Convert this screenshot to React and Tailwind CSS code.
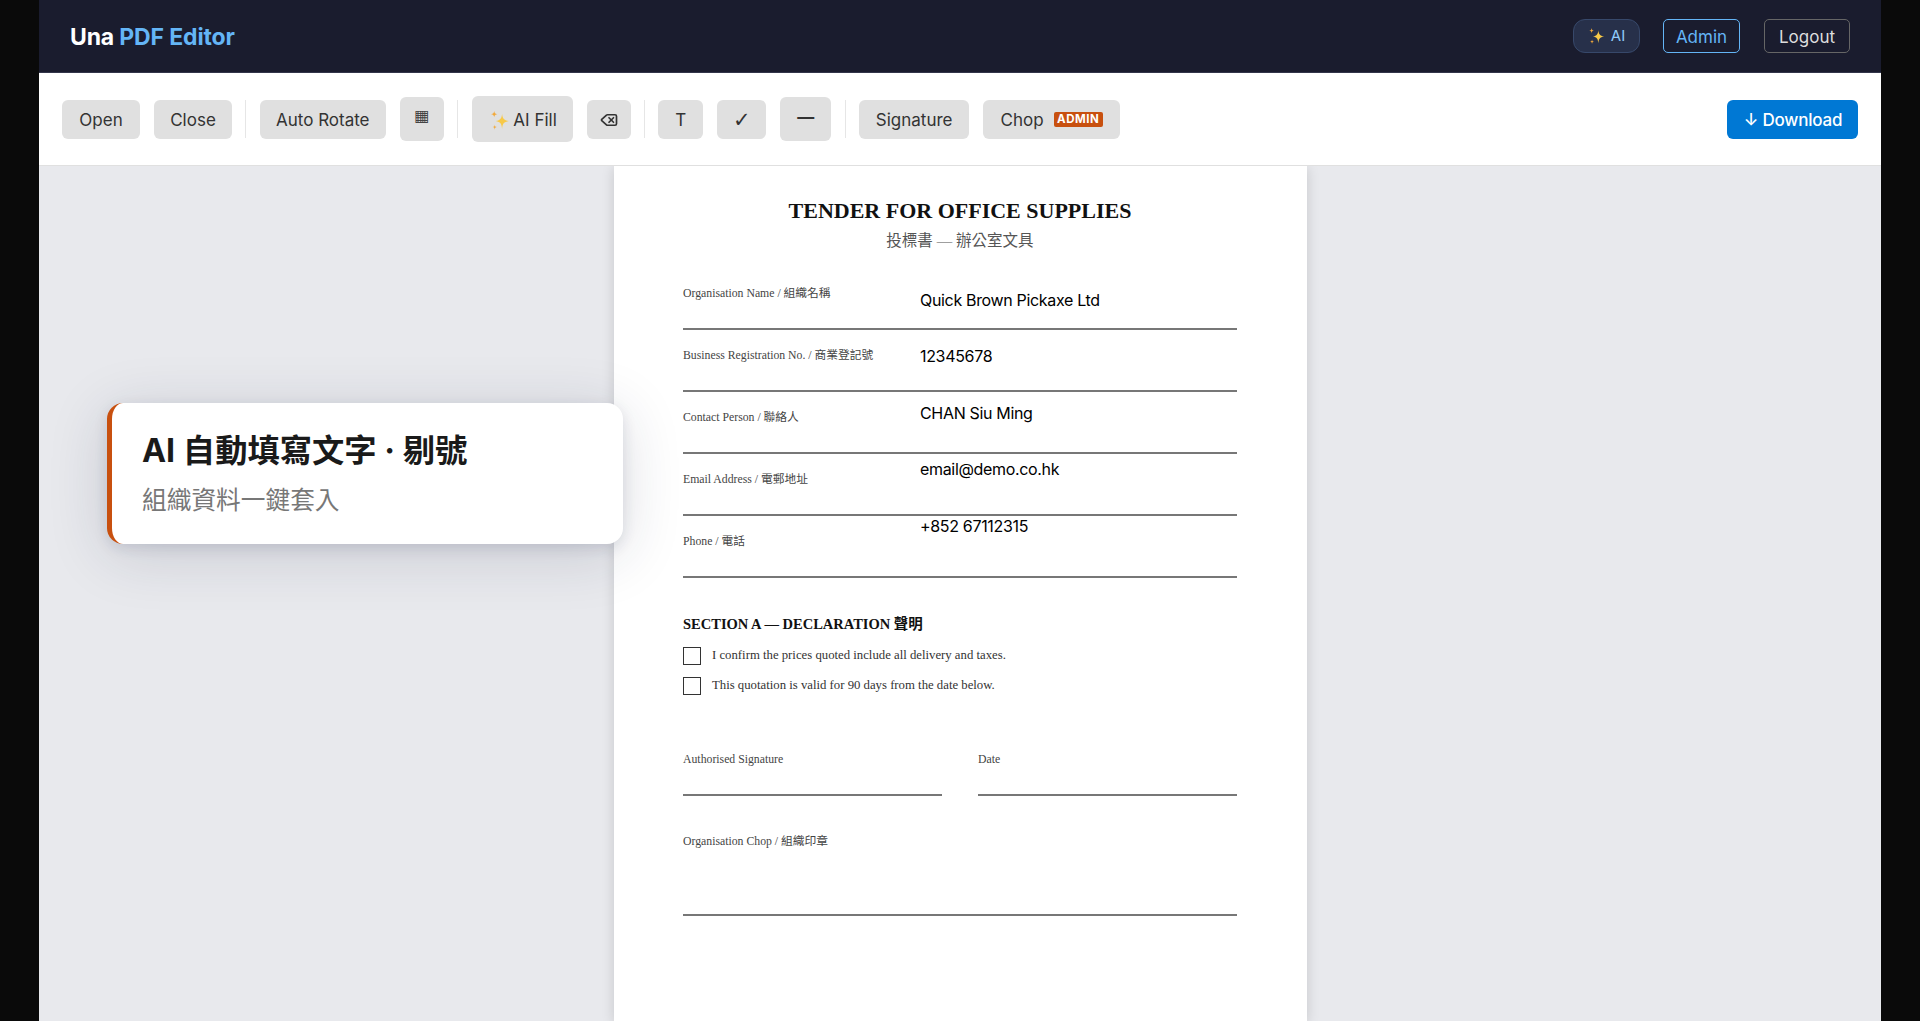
import React from "react";
import { Delete } from "lucide-react";

const sans = "font-['Inter','Noto_Sans_CJK_TC',sans-serif]";
const serif = "font-['Liberation_Serif','Noto_Sans_CJK_TC',serif]";

const Sparkles = ({ className }) => (
  <svg viewBox="0 0 20 20" className={className}>
    <path d="M11.5 3.5 C12 8 13 9.5 18 10.5 C13 11.5 12 13 11.5 18 C11 13 10 11.5 5.5 10.5 C10 9.5 11 8 11.5 3.5Z" fill="#f7c948" />
    <path d="M4 1 C4.3 3 4.8 3.7 7 4 C4.8 4.3 4.3 5 4 7 C3.7 5 3.2 4.3 1 4 C3.2 3.7 3.7 3 4 1Z" fill="#f2a93b" />
    <path d="M4.5 14 C4.7 15.5 5 16 6.5 16.3 C5 16.6 4.7 17 4.5 18.8 C4.3 17 4 16.6 2.5 16.3 C4 16 4.3 15.5 4.5 14Z" fill="#f2a93b" />
  </svg>
);

const Sep = () => <div className="w-px h-[38px] bg-[#e6e6e6] mx-[13.4px]" />;

function ToolButton({ children, className = "" }) {
  return (
    <button className={`flex items-center justify-center h-[39px] bg-[#e0e0e0] rounded-[6px] text-[17px] text-[#333] ${className}`}>
      {children}
    </button>
  );
}

function FormRow({ label, value, valueTop }) {
  return (
    <div className="relative h-[62px] border-b-2 border-[#777]">
      <div className="pt-[19px] text-[11.75px] leading-[14px] text-[#444]">{label}</div>
      {value && (
        <div
          className={`absolute left-[237px] ${sans} text-[16px] tracking-[-0.33px] leading-[20px] text-black`}
          style={{ top: valueTop }}
        >
          {value}
        </div>
      )}
    </div>
  );
}

function CheckRow({ text }) {
  return (
    <div className="flex items-center h-[30px]">
      <div className="w-[18px] h-[18px] border border-[#333] mr-[11px]" />
      <span className="text-[12.75px] text-[#333]">{text}</span>
    </div>
  );
}

export default function App() {
  return (
    <div className={`h-screen w-full overflow-hidden bg-[#0a0a0a] px-[39px] ${sans}`}>
      <div className="relative flex flex-col h-full bg-[#e8e9ed]">
        {/* Header */}
        <header className="flex items-center justify-between h-[73px] shrink-0 pl-[31px] pr-[31px] bg-[#1a1c2e] border-b border-[#33354a]">
          <div className="pt-[3px] text-[23px] font-bold text-white tracking-[-0.15px]">
            Una <span className="text-[#64b5f6]">PDF Editor</span>
          </div>
          <div className="flex items-center">
            <div className="flex items-center justify-center gap-[5px] w-[67px] h-[34px] rounded-[12px] bg-[#27304a] border border-[#37486a] text-[15px] text-[#90caf9]">
              <Sparkles className="w-[18px] h-[18px]" />
              AI
            </div>
            <button className="w-[77px] h-[34px] ml-[23px] pt-[3px] rounded-[5px] border border-[#64b5f6] text-[17px] text-[#64b5f6]">Admin</button>
            <button className="w-[86px] h-[34px] ml-[24px] pt-[3px] rounded-[5px] border border-[#666] text-[17px] text-[#ddd]">Logout</button>
          </div>
        </header>

        {/* Toolbar */}
        <div className="flex items-center h-[93px] shrink-0 pl-[23px] pr-[23.5px] bg-white border-b border-[#e0e0e0]">
          <ToolButton className="w-[78px] pt-[3px]">Open</ToolButton>
          <ToolButton className="w-[78px] ml-[14px] pt-[3px]">Close</ToolButton>
          <Sep />
          <ToolButton className="w-[126px] pt-[3px]">Auto Rotate</ToolButton>
          <ToolButton className="w-[44px] !h-[44px] ml-[14px] pb-[6px]">
            <span className="font-['DejaVu_Sans'] text-[16px] leading-none text-[#444]">▦</span>
          </ToolButton>
          <Sep />
          <ToolButton className="w-[101px] !h-[46px] gap-[2px] pt-[3px]">
            <Sparkles className="ml-[3px] w-[21px] h-[21px]" />
            AI Fill
          </ToolButton>
          <ToolButton className="w-[44px] ml-[14px] pt-[1px]">
            <Delete size={18} strokeWidth={2.25} />
          </ToolButton>
          <Sep />
          <ToolButton className="w-[45px] pt-[3px]">T</ToolButton>
          <ToolButton className="w-[49px] ml-[14px] pt-[2px]">
            <span className="font-['DejaVu_Sans'] text-[21px] leading-none">✓</span>
          </ToolButton>
          <ToolButton className="w-[51px] !h-[44px] ml-[14px] pb-[2px] font-bold">—</ToolButton>
          <Sep />
          <ToolButton className="w-[110px] pt-[3px]">Signature</ToolButton>
          <ToolButton className="w-[137px] ml-[14px] gap-[10px] pt-[3px]">
            Chop
            <span className="flex items-center justify-center w-[49px] h-[15px] pt-[1px] -mt-[3px] rounded-[2px] bg-[#c8500f] text-[11.5px] font-bold tracking-[0.5px] text-white">ADMIN</span>
          </ToolButton>
          <button className="ml-auto w-[131px] h-[39px] pt-[3px] pl-[2px] rounded-[6px] bg-[#0078d4] text-[17px] font-medium tracking-[-0.2px] text-white">↓ Download</button>
        </div>

        {/* Document */}
        <div className="flex-1 min-h-0 overflow-hidden flex justify-center">
          <div className={`w-[693px] h-full px-[69.5px] pt-[31px] bg-white shadow-[0_2px_12px_rgba(0,0,0,0.15)] ${serif} text-[#111]`}>
            <h1 className="text-center text-[22px] leading-[28px] font-bold text-[#111]">TENDER FOR OFFICE SUPPLIES</h1>
            <p className="mt-[5px] text-center text-[15.5px] leading-[22px] text-[#555]">投標書 — 辦公室文具</p>
            <div className="mt-[16px]">
              <FormRow label="Organisation Name / 組織名稱" value="Quick Brown Pickaxe Ltd" valueTop={22} />
              <FormRow label="Business Registration No. / 商業登記號" value="12345678" valueTop={16} />
              <FormRow label="Contact Person / 聯絡人" value="CHAN Siu Ming" valueTop={11} />
              <FormRow label="Email Address / 電郵地址" value="email@demo.co.hk" valueTop={5} />
              <FormRow label="Phone / 電話" value="+852 67112315" valueTop={0} />
            </div>
            <h2 className="mt-[37px] text-[14.5px] leading-[18px] font-bold text-[#111]">SECTION A — DECLARATION 聲明</h2>
            <div className="mt-[8px]">
              <CheckRow text="I confirm the prices quoted include all delivery and taxes." />
              <CheckRow text="This quotation is valid for 90 days from the date below." />
            </div>
            <div className="flex gap-[36px] mt-[51px]">
              <div className="flex-1 h-[44px] pt-[1px] border-b-2 border-[#777] text-[11.75px] leading-[14px] text-[#444]">Authorised Signature</div>
              <div className="flex-1 h-[44px] pt-[1px] border-b-2 border-[#777] text-[11.75px] leading-[14px] text-[#444]">Date</div>
            </div>
            <div className="mt-[38px] h-[82px] pt-[1px] border-b-2 border-[#777] text-[11.75px] leading-[14px] text-[#444]">Organisation Chop / 組織印章</div>
          </div>
        </div>

        {/* Callout */}
        <div className="absolute left-[68px] top-[403px] w-[516px] h-[141px] pl-[30px] pt-[26px] bg-white border-l-[5px] border-[#c8500f] rounded-[16px] shadow-[0_10px_60px_rgba(30,40,70,0.16),0_4px_14px_rgba(30,40,70,0.12)]">
          <div className="text-[32.3px] leading-[44px] font-bold text-[#1a1a1a]">AI 自動填寫文字 · 剔號</div>
          <div className="mt-[10px] text-[24.7px] leading-[34px] text-[#777]">組織資料一鍵套入</div>
        </div>
      </div>
    </div>
  );
}
